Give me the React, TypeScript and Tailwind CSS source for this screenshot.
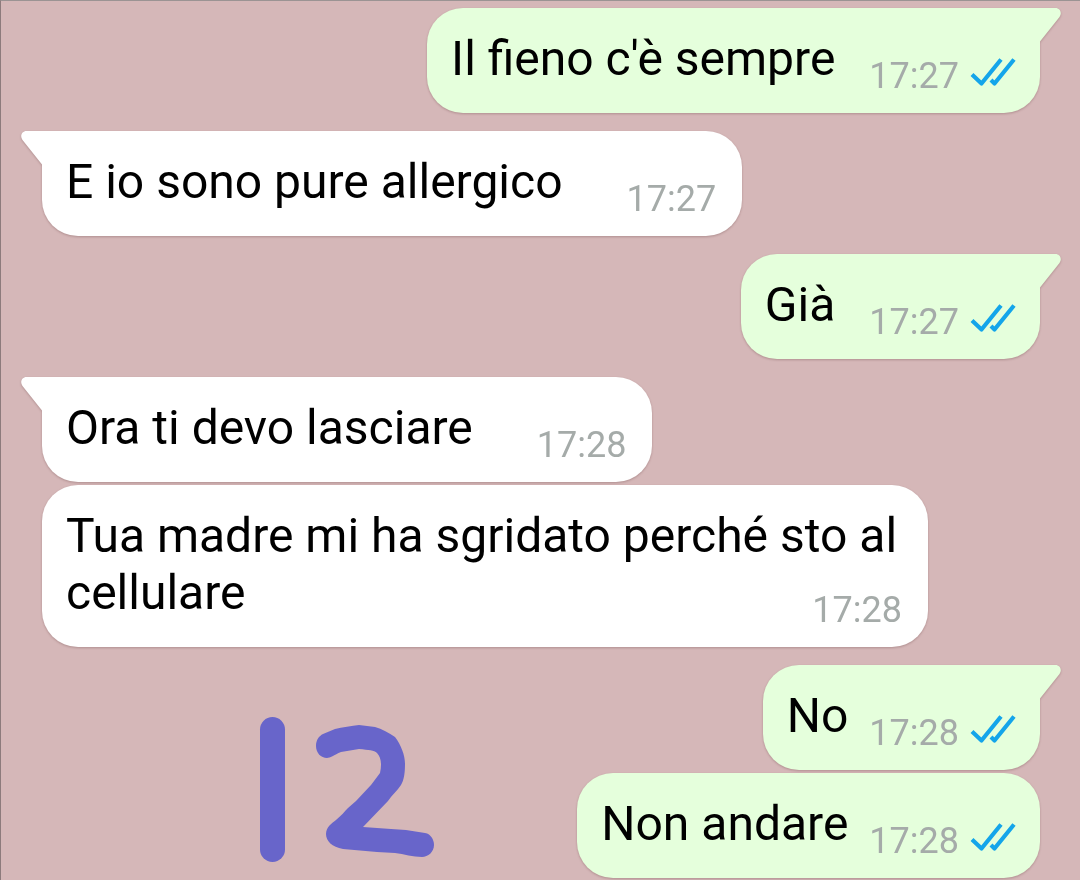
import React from "react";

type Message = {
  text: string;
  time: string;
  sent: boolean;
  first: boolean;
  multiline?: boolean;
  compact?: boolean;
};

const messages: Message[] = [
  { text: "Il fieno c'è sempre", time: "17:27", sent: true, first: true },
  { text: "E io sono pure allergico", time: "17:27", sent: false, first: true },
  { text: "Già", time: "17:27", sent: true, first: true },
  { text: "Ora ti devo lasciare", time: "17:28", sent: false, first: true },
  {
    text: "Tua madre mi ha sgridato perché sto al cellulare",
    time: "17:28",
    sent: false,
    first: false,
    multiline: true,
  },
  { text: "No", time: "17:28", sent: true, first: true, compact: true },
  { text: "Non andare", time: "17:28", sent: true, first: false, compact: true },
];

function ReadTicks() {
  return (
    <svg
      role="img"
      aria-label="Letto"
      viewBox="0 0 46 30"
      className="h-[30px] w-[46px]"
      fill="none"
      stroke="#14a5ea"
      strokeWidth="4.200"
      strokeLinejoin="round"
    >
      <path d="M2 16.500 11.500 25.500 31 1.500" />
      <path d="M21 22 24.500 25.500 44 1.500" />
    </svg>
  );
}

function Tail({ sent }: { sent: boolean }) {
  return (
    <svg
      aria-hidden="true"
      viewBox="0 0 22 34"
      className={
        sent
          ? "absolute top-0 left-full -ml-px h-[34px] w-[22px] fill-[#e5ffdc]"
          : "absolute top-0 right-full -mr-px h-[34px] w-[22px] -scale-x-100 fill-white"
      }
    >
      <path d="M0 0H16.500C21 0 23.500 5 20.500 9L1 33.500V34H0Z" />
    </svg>
  );
}

function Bubble({ message }: { message: Message }) {
  const { text, time, sent, first, multiline, compact } = message;
  const shape = [
    "relative max-w-[886px] rounded-[36px] pt-[22px] pb-4 pl-6 drop-shadow-[0_1px_1px_rgba(90,50,50,0.3)]",
    sent ? "self-end bg-[#e5ffdc] pr-6" : "self-start bg-white pr-[26px]",
    first ? "mt-[18px]" : "mt-[3px]",
    first && sent ? "rounded-tr-none" : "",
    first && !sent ? "rounded-tl-none" : "",
  ].join(" ");

  if (multiline) {
    return (
      <li className={shape}>
        <p className="flow-root text-5xl/[57px] text-black">
          {text}
          <time className="float-right mt-[25px] text-4xl/[42px] text-[#a5aba9]">{time}</time>
        </p>
      </li>
    );
  }

  return (
    <li className={shape}>
      {first && <Tail sent={sent} />}
      <div className={sent ? (compact ? "flex gap-[21px]" : "flex gap-[34px]") : "flex gap-16"}>
        <p className="pb-[10px] text-5xl/[57px] text-black">{text}</p>
        <div className="flex items-end gap-[11px] self-end">
          <time className="text-4xl/[42px] text-[#a5aba9]">{time}</time>
          {sent && (
            <span className="pb-[9px]">
              <ReadTicks />
            </span>
          )}
        </div>
      </div>
    </li>
  );
}

export default function App() {
  return (
    <main className="relative min-h-screen overflow-hidden border-t border-l border-t-[#9b9393] border-l-[#8d7b7c] bg-[#d5b7b8] font-['Roboto',sans-serif]">
      <ul className="-mt-[11px] flex flex-col pr-10 pl-[41px]">
        {messages.map((message, index) => (
          <Bubble key={index} message={message} />
        ))}
      </ul>
      <svg
        role="img"
        aria-label="12"
        viewBox="250 705 200 165"
        className="absolute top-[704px] left-[249px] h-[165px] w-[200px]"
        fill="#6865ca"
      >
        <rect x="260" y="717" width="25" height="145" rx="12.500" />
        <path d="M316 746C316 740 319 736 323 734L335 729C342 727 352 726 359 725L375 727C382 729 389 733 395 737C401 745 405 755 405 764C405 773 404 780 401 785C397 791 392 795 388 801L363 827L391 829L406 830L425 833C431 834 434 840 434 845C434 852 428 857 422 857C413 857 404 854 395 853L377 852L343 849C332 847 326 841 326 834C326 827 332 823 336 820C341 816 345 811 348 808L356 801L371 785L380 773C382 764 381 757 377 753C374 750 369 750 359 749L341 752C334 755 330 758 327 758C321 758 316 753 316 746Z" />
      </svg>
    </main>
  );
}
